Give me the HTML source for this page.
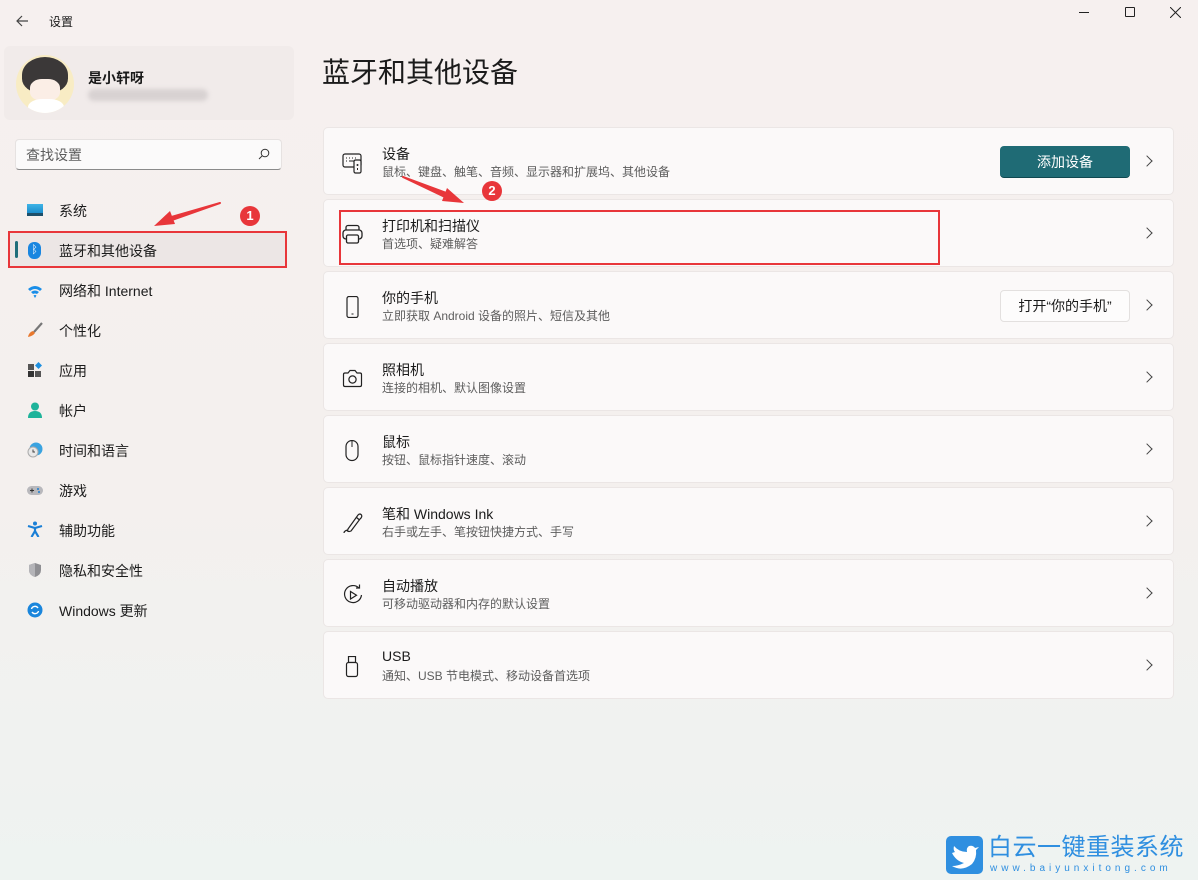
<!DOCTYPE html>
<html><head><meta charset="utf-8"><style>
*{box-sizing:border-box;margin:0;padding:0}
body{width:1198px;height:880px;overflow:hidden;font-family:"Liberation Sans","Noto Sans CJK SC",sans-serif;color:#1a1a1a;position:relative;
background:linear-gradient(180deg,#f6f0ef 0%,#f4f0ee 55%,#eef3f1 100%);}
.abs{position:absolute}
.t{font-size:12px;color:#1a1a1a}
.nav{position:absolute;left:59px;font-size:14px;color:#1b1b1b;margin-top:-2px}
.ico{position:absolute;left:27px;width:16px;height:16px}
.card{position:absolute;left:323px;width:851px;height:68px;background:#fbf9f9;border:1px solid #ebe6e5;border-radius:5px}
.card .ti{position:absolute;left:58px;top:16px;font-size:14px;color:#1b1b1b}
.card .su{position:absolute;left:58px;top:35px;font-size:12px;color:#5d5d5d}
.card .ch{position:absolute;right:22px;top:29px;width:8px;height:8px;border-right:1.3px solid #444;border-top:1.3px solid #444;transform:rotate(45deg)}
.card svg{position:absolute;left:18px;top:24px}
.red{position:absolute;border:2px solid #e8363a}
.num{position:absolute;width:20px;height:20px;border-radius:50%;background:#e8363a;color:#fff;font-size:13px;text-align:center;line-height:20px;font-weight:bold}
</style></head><body>
<svg class="abs" style="left:14px;top:13px" width="16" height="16"><path d="M14 8H3M8 3L3 8l5 5" stroke="#444" stroke-width="1.2" fill="none"/></svg>
<div class="abs t" style="left:49px;top:13px">设置</div>
<div class="abs" style="left:1079px;top:12px;width:10px;height:1px;background:#222"></div>
<div class="abs" style="left:1125px;top:7px;width:10px;height:10px;border:1px solid #222;border-radius:1px"></div>
<svg class="abs" style="left:1170px;top:7px" width="11" height="11"><path d="M0 0L11 11M11 0L0 11" stroke="#222" stroke-width="1"/></svg>
<div class="abs" style="left:4px;top:46px;width:290px;height:74px;background:#f1ebea;border-radius:6px"></div>
<div class="abs" style="left:16px;top:55px;width:58px;height:58px;border-radius:50%;background:#f8ecc4;overflow:hidden">
<div style="position:absolute;left:6px;top:2px;width:46px;height:36px;border-radius:50% 50% 40% 40%;background:#3b3838"></div>
<div style="position:absolute;left:14px;top:24px;width:30px;height:22px;border-radius:40%;background:#fbeee6"></div>
<div style="position:absolute;left:12px;top:44px;width:36px;height:20px;background:#fff;border-radius:40% 40% 0 0"></div></div>
<div class="abs" style="left:88px;top:68px;font-size:14px;font-weight:bold">是小轩呀</div>
<div class="abs" style="left:88px;top:89px;width:120px;height:12px;background:#d8d2d2;border-radius:6px;filter:blur(2px)"></div>
<div class="abs" style="left:15px;top:139px;width:267px;height:31px;background:#fbfafa;border:1px solid #e6e2e1;border-bottom:1px solid #8a8a8a;border-radius:4px"></div>
<div class="abs" style="left:26px;top:145px;font-size:14px;color:#5c5c5c">查找设置</div>
<svg class="abs" style="left:258px;top:148px" width="12" height="12"><circle cx="7" cy="5" r="3.8" stroke="#333" fill="none"/><path d="M4.3 7.7L1 11" stroke="#333"/></svg>
<div class="abs" style="left:10px;top:231px;width:276px;height:36px;background:#ece6e5"></div>
<div class="abs" style="left:15px;top:241px;width:3px;height:17px;border-radius:2px;background:#1f6e7a"></div>
<div class="ico" style="top:204px;height:12px;background:linear-gradient(#3fb4e6,#1b8dcb);border-bottom:3px solid #1d4f6a"></div>
<div class="nav" style="top:203px">系统</div>
<div class="ico" style="top:242px;left:28px;width:13px;height:17px;border-radius:6px;background:#1a86e0;color:#fff;font-size:11px;text-align:center;line-height:17px">ᛒ</div>
<div class="nav" style="top:243px">蓝牙和其他设备</div>
<svg class="ico" style="top:284px" width="16" height="16"><path d="M1 5Q8-1 15 5L13 7Q8 3 3 7Z M4 8Q8 5 12 8L10 10Q8 9 6 10Z M8 14L6.5 11.5Q8 10.5 9.5 11.5Z" fill="#1a8ee8"/></svg>
<div class="nav" style="top:283px">网络和 Internet</div>
<svg class="ico" style="top:322px" width="16" height="16"><path d="M15 1L7 10" stroke="#777" stroke-width="2.2"/><path d="M6 9Q2 10 1 15Q6 14 8 11Z" fill="#e8782d"/></svg>
<div class="nav" style="top:323px">个性化</div>
<svg class="ico" style="top:362px" width="16" height="16"><rect x="1" y="2" width="6" height="6" fill="#555"/><rect x="1" y="9" width="6" height="6" fill="#333"/><rect x="8" y="9" width="6" height="6" fill="#555"/><path d="M11.5 0L15 3.5 11.5 7 8 3.5Z" fill="#1e90e0"/></svg>
<div class="nav" style="top:363px">应用</div>
<svg class="ico" style="top:402px" width="16" height="16"><circle cx="8" cy="4.5" r="4" fill="#1eb39a"/><path d="M1 16Q1 9 8 9Q15 9 15 16Z" fill="#1eb39a"/></svg>
<div class="nav" style="top:403px">帐户</div>
<svg class="ico" style="top:442px" width="16" height="16"><circle cx="9" cy="7" r="6.5" fill="#3aa3e0"/><circle cx="6" cy="10" r="5" fill="#e8e8e8" stroke="#aaa"/><path d="M6 7.5V10H8" stroke="#444" fill="none"/></svg>
<div class="nav" style="top:443px">时间和语言</div>
<svg class="ico" style="top:482px" width="16" height="16"><rect x="0" y="4" width="16" height="9" rx="4.5" fill="#b8b8bc"/><path d="M3 8.5H7M5 6.5V10.5" stroke="#333"/><circle cx="11" cy="7" r="1" fill="#1e7fd0"/><circle cx="12" cy="10" r="1" fill="#1e7fd0"/></svg>
<div class="nav" style="top:483px">游戏</div>
<svg class="ico" style="top:521px" width="16" height="16"><circle cx="8" cy="2.5" r="2" fill="#1a7fd6"/><path d="M1 5L8 7 15 5M8 7V10L4.5 16M8 10L11.5 16" stroke="#1a7fd6" stroke-width="2.2" fill="none"/></svg>
<div class="nav" style="top:523px">辅助功能</div>
<svg class="ico" style="top:562px" width="16" height="16"><path d="M8 1L14 3V8Q14 13 8 15Q2 13 2 8V3Z" fill="#8f8f93"/><path d="M8 1V15Q2 13 2 8V3Z" fill="#b4b4b8"/></svg>
<div class="nav" style="top:563px">隐私和安全性</div>
<svg class="ico" style="top:602px" width="16" height="16"><circle cx="8" cy="8" r="7.5" fill="#1a86dc"/><path d="M4.5 7A3.6 3.6 0 0 1 11 6M11.5 9A3.6 3.6 0 0 1 5 10" stroke="#fff" stroke-width="1.4" fill="none"/></svg>
<div class="nav" style="top:603px">Windows 更新</div>
<div class="red" style="left:8px;top:231px;width:279px;height:37px"></div>
<div class="num" style="left:240px;top:206px">1</div>
<div class="abs" style="left:322px;top:51px;font-size:28px;color:#1b1b1b">蓝牙和其他设备</div>
<div class="card" style="top:127px"><svg width="22" height="22"><rect x="1" y="2" width="18" height="13" rx="2" stroke="#222" fill="none" stroke-width="1.2"/><path d="M4 6h1M7 6h1M10 6h1M13 6h1M4 9h1M7 9h6" stroke="#222"/><rect x="12" y="8" width="7" height="13" rx="1.5" fill="#fbf9f9" stroke="#222" stroke-width="1.2"/><circle cx="15.5" cy="13" r="1" fill="#222"/><path d="M15.5 16v2" stroke="#222"/></svg><div class="ti">设备</div><div class="su">鼠标、键盘、触笔、音频、显示器和扩展坞、其他设备</div>
<div class="abs" style="left:676px;top:18px;width:130px;height:32px;background:#1f6b75;border-radius:4px;color:#fff;font-size:14px;text-align:center;line-height:32px;border-bottom:1px solid #0f4850">添加设备</div><div class="ch"></div></div>
<div class="card" style="top:199px"><svg width="22" height="22"><rect x="4" y="1.5" width="13" height="6" rx="2" stroke="#222" fill="none" stroke-width="1.3"/><rect x="1" y="6" width="19" height="9" rx="3" fill="#fbf9f9" stroke="#222" stroke-width="1.3"/><rect x="4.5" y="11" width="12" height="8" rx="1.5" fill="#fbf9f9" stroke="#222" stroke-width="1.3"/></svg><div class="ti">打印机和扫描仪</div><div class="su">首选项、疑难解答</div><div class="ch"></div></div>
<div class="card" style="top:271px"><svg width="22" height="22"><rect x="5" y="0.5" width="11" height="21" rx="2" stroke="#222" fill="none" stroke-width="1.2"/><path d="M9.5 18h2" stroke="#222"/></svg><div class="ti">你的手机</div><div class="su">立即获取 Android 设备的照片、短信及其他</div>
<div class="abs" style="left:676px;top:18px;width:130px;height:32px;background:#fdfcfc;border:1px solid #e3e0df;border-radius:4px;font-size:14px;text-align:center;line-height:30px">打开“你的手机”</div><div class="ch"></div></div>
<div class="card" style="top:343px"><svg width="22" height="22"><path d="M1.5 6.5Q1.5 5 3 5H6L8 2.5H13L15 5H18Q19.5 5 19.5 6.5V17Q19.5 18.5 18 18.5H3Q1.5 18.5 1.5 17Z" stroke="#222" fill="none" stroke-width="1.2"/><circle cx="10.5" cy="11.5" r="3.6" stroke="#222" fill="none" stroke-width="1.2"/></svg><div class="ti">照相机</div><div class="su">连接的相机、默认图像设置</div><div class="ch"></div></div>
<div class="card" style="top:415px"><svg width="22" height="22"><rect x="4" y="0.5" width="12" height="20" rx="6" stroke="#222" fill="none" stroke-width="1.2"/><path d="M10 1v6" stroke="#222"/></svg><div class="ti">鼠标</div><div class="su">按钮、鼠标指针速度、滚动</div><div class="ch"></div></div>
<div class="card" style="top:487px"><svg width="22" height="22"><path d="M6 17L16 3Q18 1 19.5 3Q20.5 5 18 7L9 19Q7 20 5.5 19Z M14 5L17.5 8 M5.5 18Q2 19 2 21" stroke="#222" fill="none" stroke-width="1.2"/></svg><div class="ti">笔和 Windows Ink</div><div class="su">右手或左手、笔按钮快捷方式、手写</div><div class="ch"></div></div>
<div class="card" style="top:559px"><svg width="22" height="22"><path d="M17 4A8.5 8.5 0 1 0 19.5 11" stroke="#222" fill="none" stroke-width="1.2"/><path d="M14 4H17.5V0.5" stroke="#222" fill="none" stroke-width="1.2"/><path d="M8.5 7.5V15L14.5 11.2Z" stroke="#222" fill="none" stroke-width="1.2"/></svg><div class="ti">自动播放</div><div class="su">可移动驱动器和内存的默认设置</div><div class="ch"></div></div>
<div class="card" style="top:631px"><svg width="22" height="22"><rect x="6.5" y="0.5" width="7" height="6" stroke="#222" fill="none" stroke-width="1.2"/><rect x="4.5" y="6.5" width="11" height="14" rx="2" stroke="#222" fill="#fbf9f9" stroke-width="1.2"/></svg><div class="ti">USB</div><div class="su">通知、USB 节电模式、移动设备首选项</div><div class="ch"></div></div>
<div class="red" style="left:339px;top:210px;width:601px;height:55px"></div>
<div class="num" style="left:482px;top:181px">2</div>
<svg class="abs" style="left:0;top:0" width="1198" height="880">
<path d="M220 203L168 218L169 221Z" fill="#e8363a" stroke="#e8363a" stroke-width="2" stroke-linejoin="round"/>
<path d="M154 226L170 211L175 224Z" fill="#e8363a"/>
<path d="M403 177L449 194L447 198Z" fill="#e8363a" stroke="#e8363a" stroke-width="2" stroke-linejoin="round"/>
<path d="M464 203L447 188L442 201Z" fill="#e8363a"/>
</svg>
<svg class="abs" style="left:946px;top:836px" width="37" height="38"><rect width="37" height="38" rx="5" fill="#2f8fe0"/><path d="M6 17Q10 25 18 27Q12 30 6 30Q16 36 26 28Q31 22 30 14L33 11 29 12Q27 9 23 10Q20 12 21 16Q13 16 8 10Q7 14 9 16Z" fill="#fff"/></svg>
<div class="abs" style="left:988px;top:834px;font-size:24px;color:#2f8fe0;white-space:nowrap;line-height:28px;letter-spacing:0.5px">白云一键重装系统</div>
<div class="abs" style="left:990px;top:863px;font-size:10px;color:#2f8fe0;letter-spacing:4px;white-space:nowrap">www.baiyunxitong.com</div>
</body></html>
